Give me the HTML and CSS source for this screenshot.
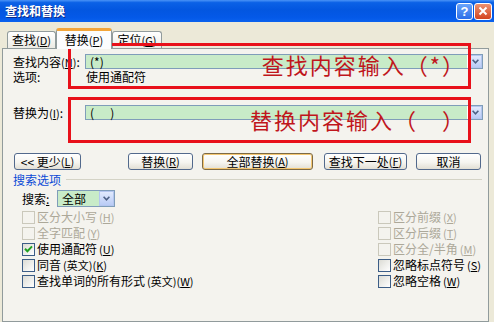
FILE: index.html
```html
<!DOCTYPE html>
<html lang="zh-CN">
<head>
  <meta charset="UTF-8" />
  <title>查找和替换</title>
  <link rel="stylesheet" href="styles.css">
</head>
<body>
  <div class="window">
    <div class="titlebar">
      <span class="title">查找和替换</span>
      <div class="title-buttons">
        <span class="tbtn help">?</span>
        <span class="tbtn close">
          <svg width="10" height="10" viewBox="0 0 10 10"><path d="M1.5 1.5 L8.5 8.5 M8.5 1.5 L1.5 8.5" stroke="#fff" stroke-width="2"/></svg>
        </span>
      </div>
    </div>

    <div class="client">
      <div class="tabs">
        <span class="tab tab-find">查找<span class="key">(<u>D</u>)</span></span>
        <span class="tab tab-replace active">替换<span class="key">(<u>P</u>)</span></span>
        <span class="tab tab-goto">定位<span class="key">(<u>G</u>)</span></span>
      </div>

      <div class="panel">
        <div class="field-row find-row">
          <label>查找内容<span class="key">(<u>N</u>)</span>:</label>
          <div class="combo">
            <span class="combo-text">(*)</span>
            <span class="drop"><svg width="7" height="5" viewBox="0 0 7 5"><path d="M0.6 0.8 L3.5 3.8 L6.4 0.8" fill="none" stroke="#4d6185" stroke-width="1.6"/></svg></span>
          </div>
        </div>
        <div class="field-row opt-row">
          <label>选项:</label>
          <span class="opt-value">使用通配符</span>
        </div>
        <div class="field-row replace-row">
          <label>替换为<span class="key">(<u>I</u>)</span>:</label>
          <div class="combo">
            <span class="combo-text">(&nbsp;&nbsp;&nbsp;&nbsp;&nbsp;&nbsp;)</span>
            <span class="drop"><svg width="7" height="5" viewBox="0 0 7 5"><path d="M0.6 0.8 L3.5 3.8 L6.4 0.8" fill="none" stroke="#4d6185" stroke-width="1.6"/></svg></span>
          </div>
        </div>

        <div class="button-row">
          <span class="btn btn-more">&lt;&lt; 更少<span class="key">(<u>L</u>)</span></span>
          <span class="btn btn-replace">替换<span class="key">(<u>R</u>)</span></span>
          <span class="btn btn-all default">全部替换<span class="key">(<u>A</u>)</span></span>
          <span class="btn btn-next">查找下一处<span class="key">(<u>F</u>)</span></span>
          <span class="btn btn-cancel">取消</span>
        </div>

        <div class="group-title"><span>搜索选项</span><i class="rule"></i></div>

        <div class="search-row">
          <span class="search-label">搜索<u>:</u></span>
          <div class="search-combo">
            <span class="combo-text">全部</span>
            <span class="drop"><svg width="7" height="5" viewBox="0 0 7 5"><path d="M0.6 0.8 L3.5 3.8 L6.4 0.8" fill="none" stroke="#4d6185" stroke-width="1.6"/></svg></span>
          </div>
        </div>

        <div class="checks">
          <div class="check-col left">
            <div class="check disabled"><span class="box"></span>区分大小写<span class="key">(<u>H</u>)</span></div>
            <div class="check disabled"><span class="box"></span>全字匹配<span class="key">(<u>Y</u>)</span></div>
            <div class="check"><span class="box"><svg width="9" height="8" viewBox="0 0 9 8"><path d="M1 3.8 L3.4 6.2 L8 1.4" fill="none" stroke="#21a121" stroke-width="2"/></svg></span>使用通配符<span class="key">(<u>U</u>)</span></div>
            <div class="check"><span class="box"></span>同音<span class="key">(英文)(<u>K</u>)</span></div>
            <div class="check"><span class="box"></span>查找单词的所有形式<span class="key">(英文)(<u>W</u>)</span></div>
          </div>
          <div class="check-col right">
            <div class="check disabled"><span class="box"></span>区分前缀<span class="key">(<u>X</u>)</span></div>
            <div class="check disabled"><span class="box"></span>区分后缀<span class="key">(<u>T</u>)</span></div>
            <div class="check disabled"><span class="box"></span>区分全/半角<span class="key">(<u>M</u>)</span></div>
            <div class="check"><span class="box"></span>忽略标点符号<span class="key">(<u>S</u>)</span></div>
            <div class="check"><span class="box"></span>忽略空格<span class="key">(<u>W</u>)</span></div>
          </div>
        </div>
      </div>
    </div>

    <!-- red annotation boxes drawn over the dialog -->
    <div class="note note-find">查找内容输入（*）</div>
    <div class="note note-replace">替换内容输入（　）</div>
  </div>
</body>
</html>
```

FILE: styles.css
```css
* {
  margin: 0;
  padding: 0;
  box-sizing: border-box;
}

body {
  width: 494px;
  height: 322px;
  overflow: hidden;
  font-family: "Noto Sans CJK SC", "Liberation Sans", sans-serif;
  font-size: 12px;
  color: #000;
  background: #ece9d8;
}

.window {
  position: relative;
  height: 322px;
  display: flex;
  flex-direction: column;
}

/* title bar */
.titlebar {
  flex: none;
  height: 22px;
  display: flex;
  align-items: center;
  justify-content: space-between;
  padding: 0 2px 0 5px;
  background: linear-gradient(to bottom, #4a93f7 0%, #0b61e6 12%, #0356e0 45%, #0459e8 80%, #0b62ee 100%);
}

.title {
  color: #fff;
  font-weight: bold;
  font-size: 12px;
  line-height: 1;
  text-shadow: 1px 1px 0 #0c2a8a;
}

.title-buttons {
  display: flex;
  gap: 1px;
}

.tbtn {
  width: 17px;
  height: 17px;
  border: 1px solid #fff;
  border-radius: 3px;
  display: flex;
  align-items: center;
  justify-content: center;
}

.tbtn.help {
  background: linear-gradient(#6aa5fb, #2c6ee8);
  color: #fff;
  font-family: "Liberation Sans", sans-serif;
  font-weight: bold;
  font-size: 13px;
}

.tbtn.close {
  width: 18px;
  background: linear-gradient(#ec9271, #d4441f);
}

/* tabs + panel */
.client {
  flex: 1;
  display: flex;
  flex-direction: column;
  padding: 6px 5px 0 2px;
}

.tabs {
  flex: none;
  height: 20px;
  display: flex;
  align-items: flex-end;
  padding-left: 5px;
}

.tab {
  height: 17px;
  border: 1px solid #919b9c;
  border-bottom: none;
  border-radius: 3px 3px 0 0;
  background: linear-gradient(#fff, #ecebe5);
  display: flex;
  align-items: center;
  justify-content: center;
  line-height: 1;
}

.tab-find { width: 49px; }
.tab-replace { width: 56px; }
.tab-goto { width: 50px; }

.tab.active {
  position: relative;
  z-index: 1;
  height: 21px;
  margin-bottom: -1px;
  border-top: 3px solid #f3a53a;
  background: #fcfcfe;
}

.key {
  font-size: 11px;
}

.panel {
  flex: 1;
  border: 1px solid #919b9c;
  background: #f4f3ee;
  padding: 5px 5px 0 10px;
  display: flex;
  flex-direction: column;
}

.field-row {
  display: grid;
  grid-template-columns: 72px 1fr;
  align-items: center;
  line-height: 1;
}

.find-row { height: 15px; }
.opt-row { height: 14px; margin-top: 1px; }
.replace-row { height: 15px; margin-top: 21px; }

.opt-value { padding-left: 1px; }

.combo {
  height: 15px;
  display: flex;
  border: 1px solid #7f9db9;
  background: #fff;
}

.combo-text {
  flex: 1;
  background: #c8ebc8;
  padding-left: 4px;
  display: flex;
  align-items: center;
}

.drop {
  width: 13px;
  margin-left: 2px;
  border: 1px solid #b4c6ef;
  background: linear-gradient(#e1eafd, #b9cbf5);
  display: flex;
  align-items: center;
  justify-content: center;
}

/* buttons */
.button-row {
  height: 17px;
  margin-top: 33px;
  padding-right: 2px;
  display: flex;
  gap: 9px;
}

.btn {
  height: 17px;
  border: 1px solid #52698c;
  border-radius: 3px;
  background: linear-gradient(#fff 0%, #f6f5f0 55%, #e2dfd4 100%);
  display: flex;
  align-items: center;
  justify-content: center;
  line-height: 1;
}

.btn-more { width: 67px; margin-left: 1px; margin-right: auto; }
.btn-replace { width: 65px; }
.btn-all { width: 111px; margin-right: 2px; }
.btn-next { width: 83px; }
.btn-cancel { width: 65px; }

.btn.default {
  border-color: #7d6a45;
  box-shadow: inset 0 0 0 1px #f4c772;
}

/* search options */
.group-title {
  height: 13px;
  margin-top: 3px;
  display: flex;
  align-items: center;
  color: #0b4ad6;
  line-height: 1;
}

.group-title .rule {
  flex: 1;
  height: 1px;
  margin: 0 1px 0 5px;
  background: #d4d3c6;
}

.search-row {
  height: 17px;
  margin-top: 4px;
  padding-left: 9px;
  display: flex;
  align-items: center;
  line-height: 1;
}

.search-label { width: 35px; }

.search-combo {
  width: 58px;
  height: 17px;
  display: flex;
  border: 1px solid #7f9db9;
  background: #fff;
}

.search-combo .drop {
  width: 15px;
  margin-left: 0;
}

.checks {
  margin-top: 2px;
  padding-left: 9px;
  display: flex;
}

.check-col {
  display: flex;
  flex-direction: column;
}

.check-col.left { width: 356px; }

.check {
  height: 16px;
  display: flex;
  align-items: center;
  gap: 2px;
  line-height: 1;
}

.box {
  width: 13px;
  height: 13px;
  border: 1px solid #3c5d86;
  background: linear-gradient(135deg, #dcdcd5, #fff);
  display: flex;
  align-items: center;
  justify-content: center;
}

.check.disabled { color: #aca899; }

.check.disabled .box {
  border-color: #cac8bb;
  background: #f4f3ee;
}

/* red annotations */
.note {
  position: absolute;
  left: 68px;
  width: 403px;
  height: 46px;
  border: 3px solid #e8101a;
  color: #c0161c;
  font-size: 22px;
  letter-spacing: 2px;
  line-height: 1;
  display: flex;
  align-items: center;
  justify-content: flex-end;
  padding: 0 2px 4px 0;
}

.note-find { top: 43px; }
.note-replace { top: 97px; padding-bottom: 2px; }
```
